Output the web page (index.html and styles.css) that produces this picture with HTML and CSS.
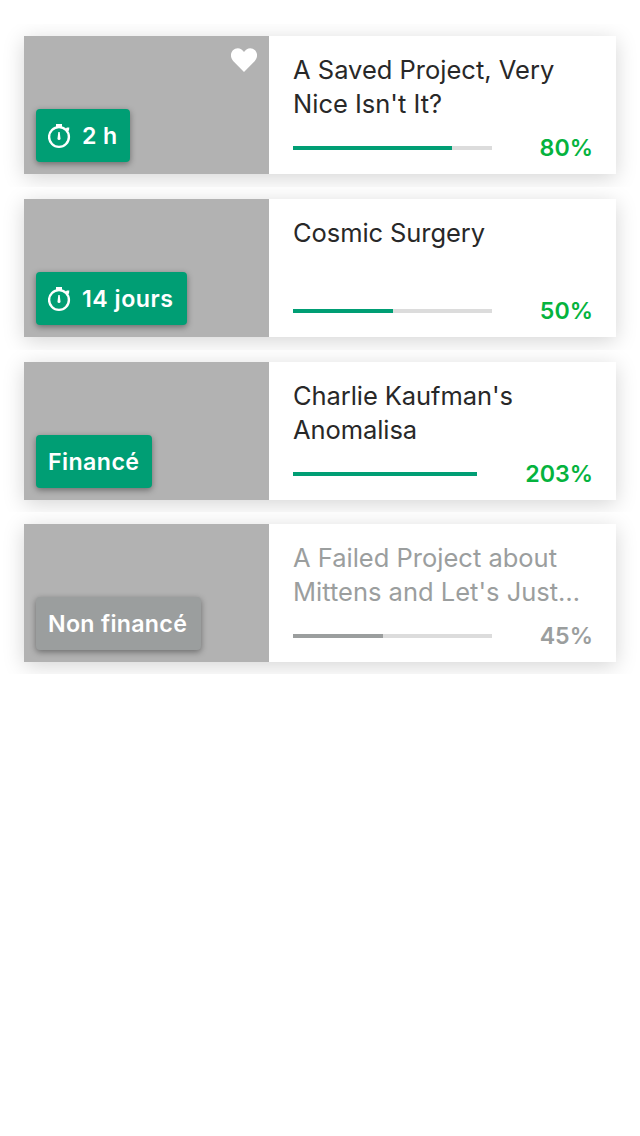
FILE: index.html
```html
<!DOCTYPE html>
<html lang="fr">
<head>
<meta charset="utf-8">
<title>Projets</title>
<link rel="stylesheet" href="styles.css">
</head>
<body>
<svg class="symbols" aria-hidden="true">
  <symbol id="timer" viewBox="0 0 24 26">
    <circle cx="11" cy="14" r="9.9" fill="none" stroke="#fff" stroke-width="2.4"/>
    <path d="M8 1h6v3H8zM17.6 5.700l1.300-1.100h2.400l-.3 3-1.500 1z" fill="#fff"/>
    <path d="M10.300 9h1.400l.8 6.400a1.500 1.500 0 0 1-3 0z" fill="#fff"/>
  </symbol>
</svg>
<main class="list">
  <section class="cell">
    <article class="card">
      <div class="photo">
        <svg class="heart" viewBox="0 0 26 24"><path d="M13 24 2.4 13.2C-.8 9.900-.8 5.200 1.900 2.300 5.100-.9 10.200-.6 13 4 15.800-.6 20.900-.9 24.100 2.300 26.800 5.200 26.800 9.900 23.600 13.200Z" fill="#fff"/></svg>
        <div class="badge hours"><svg class="timer"><use href="#timer"/></svg><span>2 h</span></div>
      </div>
      <div class="info">
        <h2 class="title">A Saved Project, Very<br>Nice Isn't It?</h2>
        <div class="stats"><div class="track"><div class="bar" style="width:80%"></div></div><span class="percent">80%</span></div>
      </div>
    </article>
  </section>
  <section class="cell">
    <article class="card">
      <div class="photo">
        <div class="badge days"><svg class="timer"><use href="#timer"/></svg><span>14 jours</span></div>
      </div>
      <div class="info">
        <h2 class="title snug">Cosmic Surgery</h2>
        <div class="stats"><div class="track"><div class="bar" style="width:50%"></div></div><span class="percent">50%</span></div>
      </div>
    </article>
  </section>
  <section class="cell short">
    <article class="card">
      <div class="photo">
        <div class="badge funded"><span>Financé</span></div>
      </div>
      <div class="info">
        <h2 class="title snug">Charlie Kaufman's<br>Anomalisa</h2>
        <div class="stats"><div class="track narrow"><div class="bar" style="width:100%"></div></div><span class="percent">203%</span></div>
      </div>
    </article>
  </section>
  <section class="cell short">
    <article class="card failed">
      <div class="photo">
        <div class="badge unfunded"><span>Non financé</span></div>
      </div>
      <div class="info">
        <h2 class="title">A Failed Project about<br>Mittens and Let's Just…</h2>
        <div class="stats"><div class="track"><div class="bar" style="width:45%"></div></div><span class="percent">45%</span></div>
      </div>
    </article>
  </section>
</main>
</body>
</html>
```
FILE: styles.css
```css
* { box-sizing: border-box; }
body { margin: 0; background: #fff; font-family: Inter, "Liberation Sans", sans-serif; }
.symbols { display: none; }
.list { padding-top: 24px; }
.cell { height: 163px; padding: 12px 24px 0; overflow: hidden; background: #fff; }
.cell.short { height: 162px; }
.card { display: flex; height: 138px; background: #fff; box-shadow: 0 4px 20px rgba(0,0,0,.17); }
.photo { position: relative; width: 245px; padding: 0 12px 12px; background: #b2b2b2; display: flex; align-items: flex-end; }
.heart { position: absolute; right: 12px; top: 12px; width: 26px; height: 24px; }
.badge { height: 53px; display: flex; align-items: center; padding: 0 12px; border-radius: 4px; background: #009e74; color: #fff; font-size: 23.2px; font-weight: 600; line-height: 30px; letter-spacing: .4px; white-space: nowrap; box-shadow: 0 2px 6px rgba(0,0,0,.4); }
.hours { width: 94px; }
.days { width: 151px; letter-spacing: .5px; }
.funded { width: 116px; }
.unfunded { width: 165px; letter-spacing: .3px; }
.timer { flex: none; width: 24px; height: 26px; margin-right: 10px; }
.info { flex: 1; padding: 17px 23px 0 24px; display: flex; flex-direction: column; }
.title { margin: 0; height: 68px; font-size: 25.5px; font-weight: 400; line-height: 34px; color: #282828; white-space: nowrap; }
.snug { letter-spacing: -.08px; }
.stats { display: flex; align-items: center; justify-content: space-between; height: 30px; margin-top: 12px; }
.track { width: 199px; height: 4px; background: #dcdcdc; }
.track.narrow { width: 184px; }
.bar { height: 4px; background: #009e74; }
.percent { font-size: 23.2px; font-weight: 600; line-height: 30px; color: #05b33e; }
.failed .badge { background: #9b9e9e; }
.failed .title, .failed .percent { color: #9b9e9e; }
.failed .bar { background: #9b9e9e; }
```
